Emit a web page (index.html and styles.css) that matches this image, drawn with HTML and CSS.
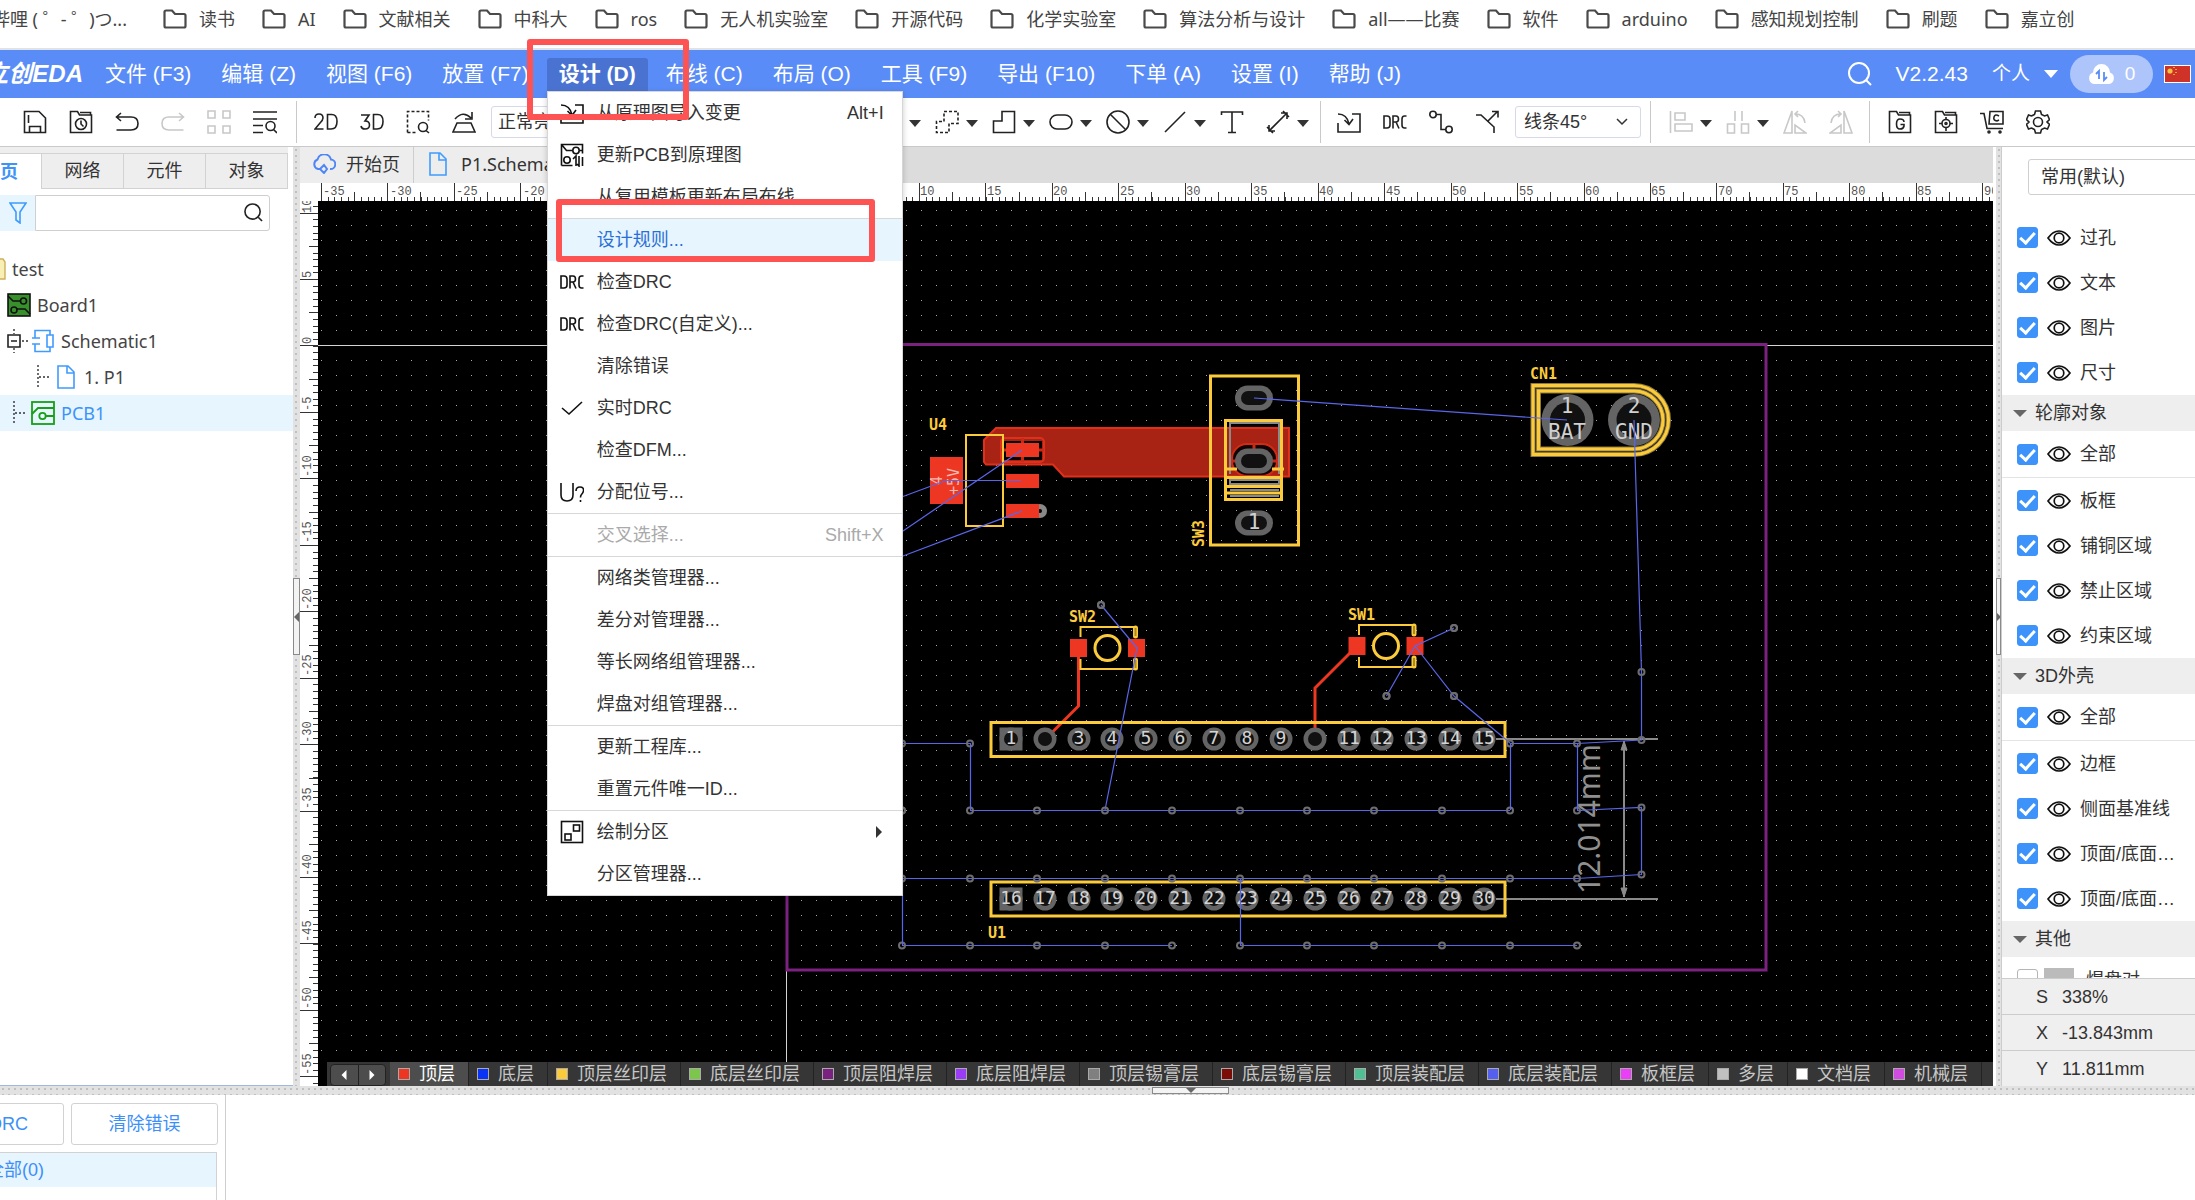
FILE: index.html
```html
<!DOCTYPE html>
<html lang="zh-CN">
<head>
<meta charset="utf-8">
<title>立创EDA</title>
<link rel="stylesheet" href="styles.css">
</head>
<body>
<svg class="defs" aria-hidden="true">
  <symbol id="i-folder" viewBox="0 0 24 20"><path d="M1.500 17V3q0-1.500 1.500-1.500h6l3 3.500h9q1.500 0 1.500 1.500V17q0 1.500-1.500 1.500H3q-1.500 0-1.500-1.500z" fill="none" stroke="#4a4a4a" stroke-width="2.200"/></symbol>
  <symbol id="i-eye" viewBox="0 0 24 18"><path d="M1 9Q6 2 12 2t11 7Q18 16 12 16T1 9z"/><circle cx="12" cy="9" r="4.800"/></symbol>
  <symbol id="i-caret" viewBox="0 0 12 7"><path d="M0 0h12L6 7z" fill="#333" stroke="none"/></symbol>
  <symbol id="i-import" viewBox="0 0 24 24"><path d="M1 13v9h22V4h-8M1 4q9 0 11 10M7.500 10l4.500 4.500L16 9"/></symbol>
  <symbol id="i-drc" viewBox="0 0 24 24"><path d="M1 6v12h3q3 0 3-3V9q0-3-3-3zM10 18.500V6h3q2.500 0 2.500 3t-2.500 3h-3m3 0l3 6.500M23.500 6h-2q-2.500 0-2.500 3v6q0 3 2.500 3h2"/></symbol>
  <symbol id="i-doc" viewBox="0 0 18 24"><path d="M1 1h10l6 6v16H1zM10 1v7h7" fill="none" stroke="#3f9bfd" stroke-width="1.600"/></symbol>
</svg>

<nav class="bookmarks">
  <a class="mark mark-cut" href="#">哔哩 ( ゜- ゜)つ...</a>
  <a class="mark" href="#"><svg><use href="#i-folder"/></svg>读书</a>
  <a class="mark" href="#"><svg><use href="#i-folder"/></svg>AI</a>
  <a class="mark" href="#"><svg><use href="#i-folder"/></svg>文献相关</a>
  <a class="mark" href="#"><svg><use href="#i-folder"/></svg>中科大</a>
  <a class="mark" href="#"><svg><use href="#i-folder"/></svg>ros</a>
  <a class="mark" href="#"><svg><use href="#i-folder"/></svg>无人机实验室</a>
  <a class="mark" href="#"><svg><use href="#i-folder"/></svg>开源代码</a>
  <a class="mark" href="#"><svg><use href="#i-folder"/></svg>化学实验室</a>
  <a class="mark" href="#"><svg><use href="#i-folder"/></svg>算法分析与设计</a>
  <a class="mark" href="#"><svg><use href="#i-folder"/></svg>all——比赛</a>
  <a class="mark" href="#"><svg><use href="#i-folder"/></svg>软件</a>
  <a class="mark" href="#"><svg><use href="#i-folder"/></svg>arduino</a>
  <a class="mark" href="#"><svg><use href="#i-folder"/></svg>感知规划控制</a>
  <a class="mark" href="#"><svg><use href="#i-folder"/></svg>刷题</a>
  <a class="mark" href="#"><svg><use href="#i-folder"/></svg>嘉立创</a>
</nav>

<header class="topbar">
  <div class="brand"><span>立创EDA</span></div>
  <nav class="menubar">
    <button>文件 (F3)</button>
    <button>编辑 (Z)</button>
    <button>视图 (F6)</button>
    <button>放置 (F7)</button>
    <div class="menu-host">
      <button class="open">设计 (D)</button>
      <div class="dropdown" role="menu">
        <button class="item"><svg class="ico"><use href="#i-import"/></svg><span>从原理图导入变更</span><kbd>Alt+I</kbd></button>
        <button class="item"><svg class="ico" viewBox="0 0 24 24"><path d="M1.500 22.500v-21h21v9M1.500 22.500h11M1.500 1.500l5 6h6M20 7.500h2.500"/><circle cx="16" cy="7.500" r="3.200"/><circle cx="7" cy="17" r="3.200"/><path d="M13 16l3-3v10M19 13v10l-2-2M22.500 14v9"/></svg><span>更新PCB到原理图</span></button>
        <button class="item"><i class="ico"></i><span>从复用模板更新布局布线</span></button>
        <hr>
        <button class="item hover"><i class="ico"></i><span>设计规则...</span></button>
        <button class="item"><svg class="ico"><use href="#i-drc"/></svg><span>检查DRC</span></button>
        <button class="item"><svg class="ico"><use href="#i-drc"/></svg><span>检查DRC(自定义)...</span></button>
        <button class="item"><i class="ico"></i><span>清除错误</span></button>
        <button class="item"><svg class="ico" viewBox="0 0 24 24"><path d="M2 12l7 6L22 6"/></svg><span>实时DRC</span></button>
        <button class="item"><i class="ico"></i><span>检查DFM...</span></button>
        <button class="item"><svg class="ico" viewBox="0 0 24 24"><path d="M1 3v12q0 6 6 6t6-6V3M16 11q0-4 4-4t3.500 4q-.5 2-2 3.500-1 1-1 3M20.500 20v2"/></svg><span>分配位号...</span></button>
        <hr>
        <button class="item" disabled><i class="ico"></i><span>交叉选择...</span><kbd>Shift+X</kbd></button>
        <hr>
        <button class="item"><i class="ico"></i><span>网络类管理器...</span></button>
        <button class="item"><i class="ico"></i><span>差分对管理器...</span></button>
        <button class="item"><i class="ico"></i><span>等长网络组管理器...</span></button>
        <button class="item"><i class="ico"></i><span>焊盘对组管理器...</span></button>
        <hr>
        <button class="item"><i class="ico"></i><span>更新工程库...</span></button>
        <button class="item"><i class="ico"></i><span>重置元件唯一ID...</span></button>
        <hr>
        <button class="item"><svg class="ico" viewBox="0 0 24 24"><rect x="1.500" y="1.500" width="21" height="21"/><rect x="13.500" y="5" width="6" height="6"/><rect x="5" y="14" width="6" height="6"/></svg><span>绘制分区</span><svg class="sub" viewBox="0 0 6 12"><path d="M0 0l6 6-6 6z"/></svg></button>
        <button class="item"><i class="ico"></i><span>分区管理器...</span></button>
      </div>
    </div>
    <button>布线 (C)</button>
    <button>布局 (O)</button>
    <button>工具 (F9)</button>
    <button>导出 (F10)</button>
    <button>下单 (A)</button>
    <button>设置 (I)</button>
    <button>帮助 (J)</button>
  </nav>
  <div class="account">
    <svg class="find" viewBox="0 0 24 24"><circle cx="11" cy="11" r="10"/><path d="M18 18l5 5"/></svg>
    <span class="version">V2.2.43</span>
    <button class="who">个人<svg viewBox="0 0 14 8"><path d="M0 0h14L7 8z" fill="#fff"/></svg></button>
    <button class="cloud"><svg viewBox="0 0 27 20"><path d="M6 20a6 6 0 0 1-1-11.500 8.500 8.500 0 0 1 17 0A6 6 0 0 1 21 20z" fill="#fff"/><path d="M11 15V7l-3 3M16 8v8l3-3" fill="none" stroke="#5a8cf8" stroke-width="1.800"/></svg>0</button>
    <svg class="flag" viewBox="0 0 27 18"><rect x=".5" y=".5" width="26" height="17" fill="#cf3226" stroke="#fff"/><circle cx="6" cy="6" r="2.600" fill="#f3c341"/><path d="M10 2v1M12 4v1M12 7v1M10 9v1" stroke="#f3c341" stroke-width="1.500"/></svg>
  </div>
</header>

<div class="toolbar">
  <div class="group g-file">
    <button class="tool" aria-label="保存"><svg viewBox="0 0 24 24"><path d="M1.500 1.500H16l6.500 6.500v14.500h-21zM6.500 22.500v-6h11v6M5.500 5v8"/></svg></button>
    <button class="tool" aria-label="历史"><svg viewBox="0 0 24 24"><path d="M1.500 22.500v-21h7l2 3.500h12v17.500zM11 2.500h10.500V5"/><circle cx="12" cy="14" r="5.500"/><path d="M12 10.500V14l2.500 2.500"/></svg></button>
    <button class="tool" aria-label="撤销"><svg viewBox="0 0 24 24"><path d="M6 3L1.500 7 6 11M1.500 7H16q7 0 7 6.500T16 20H1.500"/></svg></button>
    <button class="tool" disabled aria-label="重做"><svg viewBox="0 0 24 24"><path d="M18 3l4.500 4L18 11M22.500 7H8q-7 0-7 6.500T8 20h14.500"/></svg></button>
    <button class="tool" disabled aria-label="阵列"><svg viewBox="0 0 24 24"><path d="M1 1h7v7H1zM16 1h7v7h-7zM1 16h7v7H1zM16 16h7v7h-7z"/></svg></button>
    <button class="tool" aria-label="查找"><svg viewBox="0 0 24 24"><path d="M0 2h24M0 9h24M0 15.500h10M0 22.500h10"/><circle cx="17.500" cy="16" r="4.500"/><path d="M20.500 19.500L24 23"/></svg></button>
  </div>
  <span class="sep sep-file"></span>
  <div class="group">
    <button class="tool" aria-label="2D"><svg viewBox="0 0 24 24"><path d="M1 8q0-4 4-4t4 4q0 2-3 5l-5 6h8.500M13.500 4.500V19H17q6 0 6-7.500T17 4.500z"/></svg></button>
    <button class="tool" aria-label="3D"><svg viewBox="0 0 24 24"><path d="M1 5h8l-4 6q4.500 0 4.500 4T5 19q-3.500 0-4-3M13.500 4.500V19H17q6 0 6-7.500T17 4.500z"/></svg></button>
    <button class="tool" aria-label="框选查看"><svg viewBox="0 0 24 24"><path d="M1.500 22.500v-21h21v9M1.500 22.500h9" stroke-dasharray="3 2"/><circle cx="17" cy="17" r="4.500"/><path d="M20 20.500L23 23"/></svg></button>
    <button class="tool" aria-label="翻转"><svg viewBox="0 0 24 24"><path d="M5 13h14l4 9H1zM3 9q8-9 16-1M20 2v7h-7"/></svg></button>
    <select class="pick pick-light" aria-label="亮度"><option>正常亮度</option></select>
  </div>
  <svg class="lone-caret"><use href="#i-caret"/></svg>
  <div class="group">
    <button class="tool split" aria-label="区域"><svg viewBox="0 0 24 24"><path d="M9 1.500h14v12h-9v9H1.500v-11H9z" stroke-dasharray="3 2"/></svg><svg class="car"><use href="#i-caret"/></svg></button>
    <button class="tool split" aria-label="多边形"><svg viewBox="0 0 24 24"><path d="M10 1.500h12.500v21h-21V11H10z"/></svg><svg class="car"><use href="#i-caret"/></svg></button>
    <button class="tool split" aria-label="焊盘"><svg viewBox="0 0 24 24"><rect x="1" y="5" width="22" height="14" rx="7"/></svg><svg class="car"><use href="#i-caret"/></svg></button>
    <button class="tool split" aria-label="禁止区域"><svg viewBox="0 0 24 24"><circle cx="12" cy="12" r="11"/><path d="M4 4l16 16"/></svg><svg class="car"><use href="#i-caret"/></svg></button>
    <button class="tool split" aria-label="线条"><svg viewBox="0 0 24 24"><path d="M2 22L22 2"/></svg><svg class="car"><use href="#i-caret"/></svg></button>
    <button class="tool" aria-label="文本"><svg viewBox="0 0 24 24"><path d="M1.500 5V2h21v3M12 2v20.500M8 22.500h8"/></svg></button>
    <button class="tool split" aria-label="尺寸"><svg viewBox="0 0 24 24"><path d="M3 21L21 3M15 3h6v6M3 15v6h6M1 17l6 6M17 1l6 6"/></svg><svg class="car"><use href="#i-caret"/></svg></button>
  </div>
  <span class="sep"></span>
  <div class="group">
    <button class="tool" aria-label="导入变更"><svg><use href="#i-import"/></svg></button>
    <button class="tool" aria-label="检查DRC"><svg><use href="#i-drc"/></svg></button>
    <button class="tool" aria-label="布线"><svg viewBox="0 0 24 24"><circle cx="4" cy="4.500" r="3.200"/><circle cx="20" cy="19.500" r="3.200"/><path d="M7 4.500h5v15h5"/></svg></button>
    <button class="tool" aria-label="差分布线"><svg viewBox="0 0 24 24"><path d="M1 5h5l13 12v6M13 11l9-9M17 1.500h6v6"/></svg></button>
    <span class="pick-wrap"><select class="pick" aria-label="线条角度"><option>线条45°</option></select><svg viewBox="0 0 12 8"><path d="M1 1l5 5 5-5" fill="none" stroke="#333" stroke-width="1.500"/></svg></span>
  </div>
  <span class="sep sep-near"></span>
  <div class="group">
    <button class="tool split" disabled aria-label="对齐"><svg viewBox="0 0 24 24"><path d="M1.500 1v22M6 3h10v7H6zM6 14h17v7H6z"/></svg><svg class="car"><use href="#i-caret"/></svg></button>
    <button class="tool split" disabled aria-label="分布"><svg viewBox="0 0 24 24"><path d="M9 1v10M16 1v10M1.500 14h7v9h-7zM15.500 14h7v9h-7z"/></svg><svg class="car"><use href="#i-caret"/></svg></button>
    <button class="tool" disabled aria-label="左旋"><svg viewBox="0 0 24 24"><path d="M9 1v22H1zM12 23L23 23 12 15zM12 4q9 0 10 9M15 1l-3 3 3 3"/></svg></button>
    <button class="tool" disabled aria-label="右旋"><svg viewBox="0 0 24 24"><path d="M15 1v22h8zM12 23H1l11-8zM12 4Q3 4 2 13M9 1l3 3-3 3"/></svg></button>
  </div>
  <span class="sep sep-end"></span>
  <div class="group">
    <button class="tool" aria-label="Gerber"><svg viewBox="0 0 24 24"><path d="M1.500 22.500v-21h7l2 3.500h12v17.500zM11 2.500h10.500V5M16 12q0-3-4-3-3.500 0-3.500 5t3.500 5 4-3v-1.500h-3.500"/></svg></button>
    <button class="tool" aria-label="坐标文件"><svg viewBox="0 0 24 24"><path d="M1.500 22.500v-21h7l2 3.500h12v17.500zM11 2.500h10.500V5M12 7v3M12 17v4M5 13.500h3M16 13.500h3"/><circle cx="12" cy="13.500" r="4"/><circle cx="12" cy="13.500" r="1"/></svg></button>
    <button class="tool" aria-label="下单"><svg viewBox="0 0 24 24"><path d="M0 3.500h4l3 15h16M9 14h14V1.500H10zM19 6q-4-2.500-5 1t3 4l2-1"/><circle cx="9" cy="22" r="1"/><circle cx="20" cy="22" r="1"/></svg></button>
    <button class="tool" aria-label="设置"><svg viewBox="0 0 24 24"><path d="M9.500 1h5l1 3.500 3 1.500 3-1 2 4.500-2.500 2.500 2.500 2.500-2 4.500-3-1-3 1.500-1 3.500h-5l-1-3.500-3-1.500-3 1-2-4.500L3 12 .500 9.500l2-4.500 3 1 3-1.500z"/><circle cx="12" cy="12" r="4.500"/></svg></button>
  </div>
</div>

<div class="workspace">
  <aside class="left">
    <div class="ltabs">
      <button class="on">页</button><button>网络</button><button>元件</button><button>对象</button>
    </div>
    <div class="lsearch">
      <button class="filter" aria-label="筛选"><svg viewBox="0 0 18 22"><path d="M1 1h16l-6 9v11l-4-3v-8z" fill="none" stroke="#3f9bfd" stroke-width="1.600"/></svg></button>
      <input type="text" aria-label="搜索">
      <svg class="mag" viewBox="0 0 20 20"><circle cx="9" cy="9" r="8"/><path d="M15 15l4 4"/></svg>
    </div>
    <ul class="tree">
      <li class="t0"><svg width="6" height="22" viewBox="0 0 6 22"><path d="M0 1h3l2 3v17H0" fill="#f9efb4" stroke="#cdb05c" stroke-width="1.400"/></svg>test</li>
      <li class="t1"><svg width="24" height="24" viewBox="0 0 24 24"><rect x="1" y="1" width="22" height="22" fill="#37902b" stroke="#111" stroke-width="1.600"/><g fill="none" stroke="#111" stroke-width="1.600"><path d="M1 3l5 5h7M23 21l-5-5h-8"/><circle cx="16.500" cy="8" r="3"/><circle cx="7" cy="17" r="3"/></g></svg>Board1</li>
      <li class="t2"><svg width="22" height="24" viewBox="0 0 22 24"><path d="M1 6h12v12H1zM4 12h6" fill="none" stroke="#222" stroke-width="1.600"/><path d="M7 0v5M7 19v5M15 12h6" stroke="#333" stroke-width="1.400" stroke-dasharray="2 2"/></svg><svg class="sch" width="24" height="24" viewBox="0 0 24 24"><path d="M1 9h8M1 15h8M4 9V1.500h15V6M4 15v7.500h15V18M16 6h6v12h-6z" fill="none" stroke="#3f9bfd" stroke-width="1.600"/></svg>Schematic1</li>
      <li class="t3"><svg width="14" height="24" viewBox="0 0 14 24"><path d="M1 0v24M2 12h12" stroke="#333" stroke-width="1.400" stroke-dasharray="2 2"/></svg><svg class="page" width="18" height="24"><use href="#i-doc"/></svg>1. P1</li>
      <li class="t4 sel"><svg width="14" height="24" viewBox="0 0 14 24"><path d="M1 0v24M2 12h12" stroke="#333" stroke-width="1.400" stroke-dasharray="2 2"/></svg><svg class="pcb" width="24" height="24" viewBox="0 0 24 24"><g fill="none" stroke="#16a016" stroke-width="1.800"><rect x="1" y="1" width="22" height="22"/><path d="M1 13l6-6h16M15 15h8"/><circle cx="11.500" cy="15" r="3.200"/></g></svg>PCB1</li>
    </ul>
  </aside>
  <div class="gutter gutter-l"><button class="grip" aria-label="收起左侧"><svg viewBox="0 0 5 10"><path d="M5 0L0 5l5 5z"/></svg></button></div>

  <main class="editor">
    <div class="docs">
      <button class="doc"><svg width="24" height="20" viewBox="0 0 24 20"><path d="M9 15H6a5 5 0 0 1-.5-9.500 7 7 0 0 1 13.500 0A4.500 4.500 0 0 1 18 15M12 11l-4 4 4 4 3-4z" fill="none" stroke="#4f86f7" stroke-width="2"/></svg>开始页</button>
      <button class="doc doc-sch"><svg width="18" height="24"><use href="#i-doc"/></svg>P1.Schematic1</button>
    </div>
    <div class="corner"></div>
    <svg class="ruler ruler-h">
      <g transform="translate(-318 0)">
        <path class="tick" d="M321 16H2200" stroke-width="4" stroke-dasharray="1 5.645"/>
        <path class="tick" d="M354 13.500H2200" stroke-width="9" stroke-dasharray="1 65.450"/>
        <path class="tick" d="M321 9H2200" stroke-width="18" stroke-dasharray="1 65.450"/>
        <text x="323" y="12">-35</text><text x="390" y="12">-30</text><text x="456" y="12">-25</text><text x="523" y="12">-20</text>
        <text x="920" y="12">10</text><text x="987" y="12">15</text><text x="1053" y="12">20</text><text x="1120" y="12">25</text><text x="1186" y="12">30</text><text x="1253" y="12">35</text><text x="1319" y="12">40</text><text x="1386" y="12">45</text><text x="1452" y="12">50</text><text x="1519" y="12">55</text><text x="1585" y="12">60</text><text x="1651" y="12">65</text><text x="1718" y="12">70</text><text x="1784" y="12">75</text><text x="1851" y="12">80</text><text x="1917" y="12">85</text><text x="1984" y="12">90</text>
      </g>
    </svg>
    <svg class="ruler ruler-v">
      <g transform="translate(0 -201)">
        <path class="tick" d="M15.500 206V1200" stroke-width="5" stroke-dasharray="1 5.645"/>
        <path class="tick" d="M13.500 246V1200" stroke-width="9" stroke-dasharray="1 65.450"/>
        <path class="tick" d="M9 212.500V1200" stroke-width="18" stroke-dasharray="1 65.450"/>
        <g transform="rotate(-90)">
          <text x="-213" y="11">10</text><text x="-278" y="11">5</text><text x="-344" y="11">0</text><text x="-411" y="11">-5</text><text x="-477" y="11">-10</text><text x="-543" y="11">-15</text><text x="-610" y="11">-20</text><text x="-676" y="11">-25</text><text x="-743" y="11">-30</text><text x="-809" y="11">-35</text><text x="-876" y="11">-40</text><text x="-942" y="11">-45</text><text x="-1009" y="11">-50</text><text x="-1075" y="11">-55</text>
        </g>
      </g>
    </svg>
    <div class="stage">
      <svg class="board">
        <defs>
          <pattern id="dots" width="15" height="15" patternUnits="userSpaceOnUse" x="321" y="210"><rect width="1" height="1" fill="#a8a8a8"/></pattern>
          <marker id="via" markerUnits="userSpaceOnUse" markerWidth="10" markerHeight="10" refX="5" refY="5"><circle cx="5" cy="5" r="3" fill="none" stroke="#6e6e72" stroke-width="2"/></marker>
          <g id="pin"><circle r="11.500" fill="#646464"/><circle r="7" fill="#111"/></g>
          <g id="slot"><rect x="-19" y="-12.500" width="38" height="25" rx="12.500" fill="#646464"/><rect x="-13" y="-7" width="26" height="14" rx="7" fill="#111"/></g>
          <g id="key"><path d="M-27-11v-10h54M-27 11v10h54" class="silk2"/><path d="M28-20v8M28 12v8" stroke="#fccb3b" stroke-width="5" stroke-linecap="round"/><path d="M28-20v8M28 12v8" stroke="#a88a28" stroke-width="2"/><circle r="12.500" class="silk3"/><path d="M-37.500-9h17V9h-17zM20.500-9h17V9h-17z" fill="#ee3722"/></g>
        </defs>
        <g transform="translate(-318 -201)">
          <rect x="318" y="201" width="4000" height="3000" fill="url(#dots)"/>
          <path d="M318 345.500H4000M786.500 201V4000" stroke="#d4d4d4"/>
          <rect x="787" y="344.500" width="979" height="625.500" fill="none" stroke="#7b2180" stroke-width="3"/>

          <!-- dimension between the two pin rows -->
          <g stroke="#8a8a8a" stroke-width="2" fill="#8a8a8a"><path d="M1496 739h162M1496 899h162M1624 741v156"/><path d="M1624 741l3 9h-6zM1624 897l3-9h-6z" stroke-width="1"/></g>
          <text class="dim" transform="translate(1600 894) rotate(-90)">12.014mm</text>

          <!-- copper pour with thermal cut-outs -->
          <path d="M984 440l12-12h293v48.500h-225l-11-12h-67l-2-2.500z" fill="#a82314" stroke="#e0301c" stroke-width="2"/>
          <rect x="1001" y="438" width="43" height="24" rx="4" fill="#a82314" stroke="#e0301c" stroke-width="2"/>
          <rect x="1004" y="441" width="38" height="19" fill="#000"/>
          <path d="M1022.500 438v24M1001 450h43" stroke="#c92a18" stroke-width="3"/>
          <rect x="1232" y="444" width="45" height="32" rx="15" fill="#100405" stroke="#d22c18" stroke-width="2"/>
          <path d="M1254 444v10M1232 461h10M1267 461h10" stroke="#c92a18" stroke-width="3"/>

          <!-- U4 -->
          <circle cx="1040" cy="511" r="7" fill="#888"/><circle cx="1040" cy="511" r="2" fill="#000"/>
          <path d="M1006 443h33v14h-33zM1006 474h33v14h-33zM1006 504h33v14h-33zM930 457h33v47h-33z" fill="#ee3722"/>
          <rect x="966" y="435" width="37" height="91" class="silk2"/>
          <text class="ref" x="929" y="430">U4</text>
          <g class="net"><text transform="translate(942 485) rotate(-90)">4</text><text transform="translate(959 495) rotate(-90)">+5V</text></g>

          <!-- SW3 -->
          <path d="M1230 474v-51h49v51M1230 480h49v4h-49zM1230 490h49M1230 496h49" fill="none" stroke="#8a8a8a" stroke-width="2"/>
          <rect x="1210.500" y="376" width="88" height="169" class="silk3"/>
          <rect x="1225.500" y="420.500" width="56" height="79" class="silk3"/>
          <path d="M1226 477.500h56M1226 486.500h56M1226 493h56M1226 469h11M1272 469h12" class="silk3"/>
          <use href="#slot" x="1254" y="398"/><use href="#slot" x="1254" y="461"/><use href="#slot" x="1254" y="523"/>
          <text class="pad" x="1254" y="529">1</text>
          <text class="ref" transform="translate(1204 547) rotate(-90)">SW3</text>

          <!-- SW2 and SW1 -->
          <path d="M1078.500 657v49l-27 27M1350 653l-35 35v42" fill="none" stroke="#ee3722" stroke-width="3"/>
          <use href="#key" x="1107.500" y="648"/><use href="#key" x="1386" y="646"/>
          <text class="ref" x="1069" y="622">SW2</text><text class="ref" x="1348" y="620">SW1</text>

          <!-- CN1 -->
          <g fill="none"><path d="M1533 385.500h101a34.500 34.500 0 0 1 0 69h-101zM1538.500 391h95.500a29 29 0 0 1 0 58h-95.500z" stroke="#8d7a3c" stroke-width="5"/><path d="M1533 385.500h101a34.500 34.500 0 0 1 0 69h-101zM1538.500 391h95.500a29 29 0 0 1 0 58h-95.500z" stroke="#fccb3b" stroke-width="3"/></g>
          <g fill="#646464"><circle cx="1567.500" cy="420" r="26"/><circle cx="1634" cy="420" r="26"/></g>
          <g fill="#111"><circle cx="1567.500" cy="420" r="17.500"/><circle cx="1634" cy="420" r="17.500"/></g>
          <text class="ref" x="1530" y="379">CN1</text>
          <g class="pad"><text x="1567" y="413">1</text><text x="1634" y="413">2</text><text x="1567" y="439">BAT</text><text x="1634" y="439">GND</text></g>

          <!-- U1 pin rows -->
          <rect x="991" y="722.500" width="514" height="34" class="silk3"/>
          <rect x="991" y="882" width="514" height="34" class="silk3"/>
          <path d="M999.500 727.500h23v23h-23zM999.500 887.500h23v23h-23z" fill="#646464"/>
          <g><use href="#pin" x="1011" y="739"/><use href="#pin" x="1045" y="739"/><use href="#pin" x="1079" y="739"/><use href="#pin" x="1112" y="739"/><use href="#pin" x="1146" y="739"/><use href="#pin" x="1180" y="739"/><use href="#pin" x="1214" y="739"/><use href="#pin" x="1247" y="739"/><use href="#pin" x="1281" y="739"/><use href="#pin" x="1315" y="739"/><use href="#pin" x="1349" y="739"/><use href="#pin" x="1382" y="739"/><use href="#pin" x="1416" y="739"/><use href="#pin" x="1450" y="739"/><use href="#pin" x="1484" y="739"/></g>
          <g><use href="#pin" x="1011" y="899"/><use href="#pin" x="1045" y="899"/><use href="#pin" x="1079" y="899"/><use href="#pin" x="1112" y="899"/><use href="#pin" x="1146" y="899"/><use href="#pin" x="1180" y="899"/><use href="#pin" x="1214" y="899"/><use href="#pin" x="1247" y="899"/><use href="#pin" x="1281" y="899"/><use href="#pin" x="1315" y="899"/><use href="#pin" x="1349" y="899"/><use href="#pin" x="1382" y="899"/><use href="#pin" x="1416" y="899"/><use href="#pin" x="1450" y="899"/><use href="#pin" x="1484" y="899"/></g>
          <g class="num"><text x="1011" y="744">1</text><text x="1079" y="744">3</text><text x="1112" y="744">4</text><text x="1146" y="744">5</text><text x="1180" y="744">6</text><text x="1214" y="744">7</text><text x="1247" y="744">8</text><text x="1281" y="744">9</text><text x="1349" y="744">11</text><text x="1382" y="744">12</text><text x="1416" y="744">13</text><text x="1450" y="744">14</text><text x="1484" y="744">15</text></g>
          <g class="num"><text x="1011" y="904">16</text><text x="1045" y="904">17</text><text x="1079" y="904">18</text><text x="1112" y="904">19</text><text x="1146" y="904">20</text><text x="1180" y="904">21</text><text x="1214" y="904">22</text><text x="1247" y="904">23</text><text x="1281" y="904">24</text><text x="1315" y="904">25</text><text x="1349" y="904">26</text><text x="1382" y="904">27</text><text x="1416" y="904">28</text><text x="1450" y="904">29</text><text x="1484" y="904">30</text></g>
          <text class="ref" x="988" y="938">U1</text>

          <!-- unrouted nets -->
          <g class="rat">
            <path d="M1254 398l313 22M1634 420l7.500 252M1101 605l36 43-32 162M1454 628l-39 18-28.500 50M1415 646l39 50 56 47M1022 450L903 531M1021 480.500h-75l-43 16M1022 511L903 556"/>
            <g class="vias">
              <path d="M902 743.500H970M1510 743.500H1577L1641.500 740V672"/>
              <path d="M970 810.500H1037 1105 1172 1240 1307 1374 1442 1510M1577 810.500L1641.500 807.500V874.500L1577 878.500H1510 1442 1374 1307 1240 1172 1105 1037 970 902"/>
              <path d="M902 945.500H970 1037 1105 1172M1240 945.500H1307 1374 1442 1510 1577"/>
            </g>
            <path d="M970.500 743v67M1510.500 743v67M1577.500 743v67M902.500 878v67M1240.500 878v67"/>
            <g class="vias bare"><path d="M1101 605h0M1454 628h0M1386.500 696h0M1454 696h0M902 810.500h0"/></g>
          </g>
        </g>
      </svg>
      <div class="layers">
        <div class="pager"><button aria-label="上一层"><svg viewBox="0 0 5 10"><path d="M5 0L0 5l5 5z"/></svg></button><button aria-label="下一层"><svg viewBox="0 0 5 10"><path d="M0 0l5 5-5 5z"/></svg></button></div>
        <button class="layer on"><i class="c-red"></i>顶层</button>
        <button class="layer"><i class="c-blue"></i>底层</button>
        <button class="layer"><i class="c-gold"></i>顶层丝印层</button>
        <button class="layer"><i class="c-green"></i>底层丝印层</button>
        <button class="layer"><i class="c-plum"></i>顶层阻焊层</button>
        <button class="layer"><i class="c-violet"></i>底层阻焊层</button>
        <button class="layer"><i class="c-gray"></i>顶层锡膏层</button>
        <button class="layer"><i class="c-maroon"></i>底层锡膏层</button>
        <button class="layer"><i class="c-teal"></i>顶层装配层</button>
        <button class="layer"><i class="c-indigo"></i>底层装配层</button>
        <button class="layer"><i class="c-magenta"></i>板框层</button>
        <button class="layer"><i class="c-silver"></i>多层</button>
        <button class="layer"><i class="c-white"></i>文档层</button>
        <button class="layer"><i class="c-pink"></i>机械层</button>
      </div>
    </div>
  </main>

  <div class="gutter gutter-r"><button class="grip" aria-label="收起右侧"><svg viewBox="0 0 5 10"><path d="M0 0l5 5-5 5z"/></svg></button></div>
  <aside class="right">
    <select class="preset" aria-label="过滤方案"><option>常用(默认)</option></select>
    <div class="filters">
      <label class="row"><input type="checkbox" checked><svg><use href="#i-eye"/></svg>过孔</label>
      <label class="row"><input type="checkbox" checked><svg><use href="#i-eye"/></svg>文本</label>
      <label class="row"><input type="checkbox" checked><svg><use href="#i-eye"/></svg>图片</label>
      <label class="row"><input type="checkbox" checked><svg><use href="#i-eye"/></svg>尺寸</label>
      <h3><svg viewBox="0 0 14 7"><path d="M0 0h14L7 7z"/></svg>轮廓对象</h3>
      <label class="row all"><input type="checkbox" checked><svg><use href="#i-eye"/></svg>全部</label>
      <label class="row"><input type="checkbox" checked><svg><use href="#i-eye"/></svg>板框</label>
      <label class="row"><input type="checkbox" checked><svg><use href="#i-eye"/></svg>铺铜区域</label>
      <label class="row"><input type="checkbox" checked><svg><use href="#i-eye"/></svg>禁止区域</label>
      <label class="row"><input type="checkbox" checked><svg><use href="#i-eye"/></svg>约束区域</label>
      <h3><svg viewBox="0 0 14 7"><path d="M0 0h14L7 7z"/></svg>3D外壳</h3>
      <label class="row all"><input type="checkbox" checked><svg><use href="#i-eye"/></svg>全部</label>
      <label class="row"><input type="checkbox" checked><svg><use href="#i-eye"/></svg>边框</label>
      <label class="row"><input type="checkbox" checked><svg><use href="#i-eye"/></svg>侧面基准线</label>
      <label class="row"><input type="checkbox" checked><svg><use href="#i-eye"/></svg>顶面/底面…</label>
      <label class="row"><input type="checkbox" checked><svg><use href="#i-eye"/></svg>顶面/底面…</label>
      <h3><svg viewBox="0 0 14 7"><path d="M0 0h14L7 7z"/></svg>其他</h3>
      <label class="row"><input type="checkbox"><i class="swatch"></i>焊盘对</label>
    </div>
    <dl class="status">
      <div><dt>S</dt><dd>338%</dd></div>
      <div><dt>X</dt><dd>-13.843mm</dd></div>
      <div><dt>Y</dt><dd>11.811mm</dd></div>
    </dl>
  </aside>
</div>

<div class="gutter gutter-b"><button class="grip" aria-label="收起底部"><svg viewBox="0 0 10 5"><path d="M0 0h10L5 5z"/></svg></button></div>
<footer class="bottom">
  <section class="drc">
    <div class="acts"><button>检查DRC</button><button>清除错误</button></div>
    <div class="list"><button>全部(0)</button></div>
  </section>
</footer>

<div class="callout callout-menu"></div>
<div class="callout callout-rule"></div>
</body>
</html>
```
FILE: styles.css
```css
* { box-sizing: border-box; }
body {
  margin: 0;
  height: 100vh;
  display: flex;
  flex-direction: column;
  overflow: hidden;
  position: relative;
  background: #fff;
  color: #333;
  font: 18px/24px "Liberation Sans", "Noto Sans CJK SC", sans-serif;
}
button, input, select { font: inherit; color: inherit; margin: 0; }
button { border: 0; padding: 0; background: none; white-space: nowrap; }
.defs { position: absolute; width: 0; height: 0; }

/* bookmarks */
.bookmarks {
  flex: none;
  height: 50px;
  display: flex;
  align-items: flex-start;
  gap: 27px;
  padding-top: 6px;
  border-bottom: 2px solid #dfe3e6;
  font-family: "Noto Sans", "Noto Sans CJK SC", sans-serif;
  font-size: 18px;
  line-height: 26px;
  overflow: hidden;
}
.mark { flex: none; display: flex; align-items: center; gap: 12px; color: #444; text-decoration: none; white-space: nowrap; }
.mark svg { width: 24px; height: 20px; }
.mark-cut { width: 136px; justify-content: flex-end; padding-right: 9px; }

/* blue bar */
.topbar { flex: none; height: 48px; display: flex; align-items: center; background: #5a8cf8; color: #fff; font-size: 21px; }
.brand { width: 85px; display: flex; justify-content: flex-end; overflow: hidden; font-size: 24px; line-height: 32px; font-weight: 700; font-style: italic; white-space: nowrap; padding-right: 2px; }
.brand span { flex: none; }
.menubar { display: flex; gap: 6px; margin-left: 8px; }
.menubar > button, .open { height: 33px; padding: 0 12px; line-height: 32px; }
.menu-host { position: relative; }
.open { background: #4a73d1; border-radius: 3px 3px 0 0; font-weight: 700; }
.account { margin-left: auto; display: flex; align-items: center; padding-right: 4px; }
.find { width: 24px; height: 24px; fill: none; stroke: #fff; stroke-width: 2; }
.version { margin-left: 24px; }
.who { display: flex; align-items: center; gap: 14px; margin-left: 24px; font-size: 19px; }
.who svg { width: 14px; height: 8px; }
.cloud { margin-left: 12px; width: 83px; height: 38px; border-radius: 19px; background: #adc5fb; display: flex; align-items: center; justify-content: center; gap: 10px; font-size: 19px; }
.cloud svg { width: 27px; height: 20px; }
.flag { width: 27px; height: 18px; margin-left: 11px; }

/* design menu */
.dropdown {
  position: absolute;
  left: 0;
  top: 33px;
  z-index: 10;
  width: 356px;
  background: #fff;
  border: 1px solid #d6d6d6;
  box-shadow: 0 2px 6px rgba(0, 0, 0, .2);
  color: #333;
  font-size: 18px;
}
.dropdown hr { margin: 0; border: 0; height: 1px; background: #d8d8d8; }
.item { width: 100%; height: 42px; display: flex; align-items: center; padding: 0 18px 0 12px; text-align: left; }
.item span { margin-left: 13px; flex: 1; }
.item kbd { font: inherit; }
.item:disabled { color: #aaa; }
.item.hover { background: #e6f5fe; color: #2a6fd6; }
.ico { width: 24px; height: 24px; flex: none; fill: none; stroke: #111; stroke-width: 1.6; }
.sub { width: 6px; height: 12px; margin-right: 2px; fill: #333; }

/* toolbar */
.toolbar { flex: none; height: 49px; display: flex; align-items: center; border-bottom: 1px solid #c9c9c9; background: #fff; overflow: hidden; }
.group { display: flex; align-items: center; flex: none; }
.g-file { margin-left: 20px; }
.tool { width: 46px; height: 32px; padding-left: 3px; display: flex; align-items: center; gap: 7px; flex: none; }
.tool svg { width: 24px; height: 24px; fill: none; stroke: #222; stroke-width: 1.6; flex: none; }
.tool:disabled svg { stroke: #c8c8c8; }
.split { width: 57px; }
.tool .car, .lone-caret { width: 12px; height: 7px; flex: none; margin-top: 3px; }
.lone-caret { margin: 3px 11px 0 16px; }
.sep { width: 1px; height: 42px; background: #c9c9c9; margin: 0 13px 0 0; flex: none; }
.sep-file { margin-right: 14px; }
.sep-near { margin: 0 15px 0 9px; }
.sep-end { margin: 0 15px 0 -3px; }
.pick { appearance: none; width: 126px; height: 32px; padding: 0 8px; border: 1px solid #d6dae6; border-radius: 3px; background: #fff; }
.pick-light { width: 402px; padding: 0 6px; margin-left: -4px; }
.pick-wrap { position: relative; display: flex; margin-left: -3px; }
.pick-wrap svg { position: absolute; right: 13px; top: 12px; width: 12px; height: 8px; }

/* workspace */
.workspace { flex: 1; min-height: 0; display: flex; }
.left { flex: none; width: 293px; border-bottom: 1px solid #9db9e0; overflow: hidden; }
.ltabs { display: flex; height: 43px; padding-top: 6px; width: 288px; background: linear-gradient(#eee 6px, transparent 6px); }
.ltabs button { flex: 1; border: 1px solid #d2d2d2; border-left-width: 0; background: #eee; height: 36px; line-height: 34px; }
.ltabs .on { flex: 0 0 41px; background: #fff; color: #3d93f9; font-weight: 700; border-bottom: 0; padding-right: 23px; }
.lsearch { position: relative; display: flex; width: 270px; height: 36px; margin-top: 5px; }
.filter { width: 35px; background: #e6f5fe; display: flex; justify-content: center; align-items: center; }
.filter svg { width: 18px; height: 22px; }
.lsearch input { flex: 1; min-width: 0; border: 1px solid #cfcfcf; border-radius: 0 3px 3px 0; padding: 0 32px 0 8px; }
.mag { position: absolute; right: 7px; top: 8px; width: 19px; height: 19px; fill: none; stroke: #222; stroke-width: 1.7; }
.tree { list-style: none; margin: 20px 0 0; padding: 0; font-family: "Noto Sans", sans-serif; }
.tree li { height: 36px; display: flex; align-items: center; gap: 6px; color: #444; }
.t1 { padding-left: 7px; }
.t2 { padding-left: 7px; }
.t3 { padding-left: 37px; }
.t4 { padding-left: 13px; }
.t2 .sch { margin-left: -4px; }
.page { margin: 0 3px 0 0; }
.pcb { margin-left: -2px; }
.tree .sel { background: #e6f5fe; color: #3d93f9; }

.gutter { flex: none; display: flex; align-items: center; justify-content: center; background: radial-gradient(#c0c0c0 1px, transparent 1px) 0 0 / 6px 6px #e2e2e2; }
.gutter-l { width: 7px; }
.gutter-r { width: 9px; border-left: 3px solid #fff; border-right: 1px solid #ccc; }
.gutter-b { height: 9px; padding-left: 186px; }
.grip { background: #f3f3f3; border: 1px solid #8a8a8a; display: flex; align-items: center; justify-content: center; overflow: hidden; }
.grip svg { fill: #666; flex: none; }
.gutter-l .grip, .gutter-r .grip { width: 100%; height: 77px; }
.gutter-l .grip svg, .gutter-r .grip svg { width: 5px; height: 10px; }
.gutter-b .grip { width: 77px; height: 7px; }
.gutter-b .grip svg { width: 10px; height: 5px; }

/* editor */
.editor { flex: 1; min-width: 0; display: grid; grid-template: 36px 18px minmax(0, 1fr) / 18px minmax(0, 1fr); }
.docs { grid-column: 1 / 3; display: flex; background: #dcdcdc; }
.doc { display: flex; align-items: center; gap: 10px; width: 114px; padding: 0 0 3px 12px; background: #ededed; border-right: 1px solid #cdcdcd; font-family: "Noto Sans", "Noto Sans CJK SC", sans-serif; }
.doc-sch { width: 190px; gap: 14px; padding-left: 15px; }
.ruler { display: block; width: 100%; height: 100%; background: #fff; overflow: hidden; }
.ruler text { font: 12px "Liberation Mono", monospace; fill: #555; }
.tick { stroke: #333; fill: none; shape-rendering: crispEdges; }
.stage { display: flex; flex-direction: column; min-height: 0; background: #000; overflow: hidden; }
.board { flex: 1; min-height: 0; width: 100%; display: block; }
.board .silk2 { fill: none; stroke: #fccb3b; stroke-width: 2; }
.board .silk3 { fill: none; stroke: #fccb3b; stroke-width: 3; }
.ref { font: 700 15px "DejaVu Sans Mono", monospace; fill: #fccb3b; }
.net { font: 15px "DejaVu Sans Mono", monospace; fill: #f6b8b0; }
.pad { font: 21px "DejaVu Sans Mono", monospace; fill: #d0d0d0; text-anchor: middle; }
.num { font: 18px "DejaVu Sans Mono", monospace; fill: #d4d4d4; text-anchor: middle; }
.dim { font: 400 30px "Noto Sans", sans-serif; fill: #8f8f8f; }
.rat { fill: none; stroke: #5a66ea; stroke-width: 1.2; }
.vias path { marker: url(#via); }
.bare path { stroke: none; }

.layers { flex: none; height: 24px; margin-left: 9px; display: flex; background: #363636; color: #c6c6c6; overflow: hidden; }
.pager { flex: none; width: 56px; margin: 2px 4px 0 3px; border: 1px solid #222; border-radius: 4px; background: #4d4d4d; display: flex; }
.pager button { flex: 1; display: flex; align-items: center; justify-content: center; }
.pager button + button { border-left: 1px solid #222; }
.pager svg { width: 6px; height: 10px; fill: #fff; }
.layer { flex: none; display: flex; align-items: center; gap: 9px; padding: 0 13px 0 8px; border-right: 1px solid #222; line-height: 22px; }
.layer.on { background: #4d4d4d; color: #fff; }
.layer i { width: 12px; height: 12px; border: 1px solid #aaa; }
.c-red { background: #ee3722; }
.c-blue { background: #0a32f5; }
.c-gold { background: #fccb3b; }
.c-green { background: #7cc64b; }
.c-plum { background: #7b2180; }
.c-violet { background: #9a3cf5; }
.c-gray { background: #808080; }
.c-maroon { background: #7c0d06; }
.c-teal { background: #4fbf94; }
.c-indigo { background: #5560ee; }
.c-magenta { background: #ea3ff7; }
.c-silver { background: #c0c0c0; }
.c-white { background: #fff; }
.c-pink { background: #d14be0; }

/* right panel */
.right { flex: none; width: 193px; display: flex; flex-direction: column; overflow: hidden; }
.preset { appearance: none; flex: none; height: 36px; width: 240px; margin: 12px 0 20px 26px; padding: 0 12px; border: 1px solid #cfcfcf; border-radius: 3px; background: #fff; }
.filters { flex: 1; min-height: 0; overflow: hidden; }
.row { height: 45px; display: flex; align-items: center; padding-left: 15px; white-space: nowrap; }
.row.all { height: 47px; border-bottom: 1px solid #e4e4e4; }
.row input { appearance: none; width: 21px; height: 21px; border: 1px solid #b5b5b5; border-radius: 3px; background: #fff; display: flex; justify-content: center; flex: none; }
.row input:checked { background: #3d93f9; border-color: #3d93f9; }
.row input:checked::after { content: ""; width: 6px; height: 12px; margin-top: 1px; border: solid #fff; border-width: 0 3px 3px 0; rotate: 42deg; }
.row svg { width: 24px; height: 18px; margin: 0 9px; fill: none; stroke: #111; stroke-width: 1.7; }
.swatch { width: 30px; height: 24px; margin: 0 12px 0 6px; background: #bbb; }
.filters h3 { margin: 0; height: 36px; display: flex; align-items: center; gap: 8px; padding-left: 11px; background: #eee; font-size: 18px; font-weight: 400; }
.filters h3 svg { width: 14px; height: 7px; fill: #666; }
.status { flex: none; margin: 0; background: #efefef; }
.status div { height: 36px; display: flex; align-items: center; padding-left: 34px; border-top: 1px solid #ccc; }
.status dt { width: 26px; }
.status dd { margin: 0; }

/* bottom panel */
.bottom { flex: none; height: 105px; display: flex; }
.drc { width: 226px; border-right: 1px solid #cfcfcf; padding-top: 8px; color: #3d8ff9; display: flex; flex-direction: column; overflow: hidden; }
.acts { display: flex; gap: 7px; margin-left: -83px; }
.acts button { flex: none; width: 147px; height: 42px; border: 1px solid #d2d2d2; border-radius: 3px; }
.list { flex: 1; width: 240px; margin: 7px 0 0 -23px; border: 1px solid #d2d2d2; border-bottom: 0; }
.list button { width: 100%; height: 34px; padding-left: 8px; text-align: left; background: #e6f5fe; }

/* red highlight frames */
.callout { position: absolute; z-index: 20; border: 6px solid #fd5353; border-radius: 3px; }
.callout-menu { left: 527px; top: 39px; width: 162px; height: 81px; }
.callout-rule { left: 556px; top: 199px; width: 319px; height: 63px; }
```
